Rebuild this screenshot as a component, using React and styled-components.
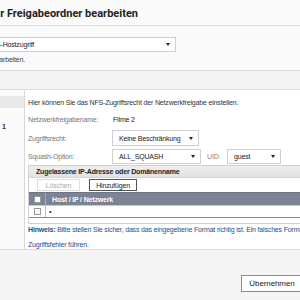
import React from "react";
import styled, { createGlobalStyle } from "styled-components";

const GlobalStyle = createGlobalStyle`
    html, body {
        margin: 0;
        padding: 0;
        background: #fafafa;
        overflow: hidden;
    }
    body {
        font-family: "Liberation Sans", Arial, sans-serif;
        font-size: 7px;
        letter-spacing: -0.17px;
        color: #333;
    }
`;

const Dialog = styled.div`
    width: 300px;
    height: 300px;
    display: flex;
    flex-direction: column;
    background: #fafafa;
    overflow: hidden;
`;

const Header = styled.div`
    height: 25px;
    border-bottom: 1px solid #e0e0e0;
    display: flex;
    align-items: center;
`;

// right edge of the visible title sits at x=138, the start is clipped by the window
const Title = styled.div`
    width: 138px;
    display: flex;
    justify-content: flex-end;
    white-space: nowrap;
    font-family: Roboto, "Liberation Sans", sans-serif;
    font-weight: bold;
    font-size: 11px;
    letter-spacing: 0;
    color: #222;
    padding-top: 2px;
`;

const TypeSection = styled.div`
    height: 45px;
    padding-top: 11px;
    box-sizing: border-box;
    border-bottom: 1px solid #dcdcdc;
`;

const Select = styled.div`
    box-sizing: border-box;
    height: ${(p) => p.$h || 15}px;
    width: ${(p) => p.$w}px;
    margin-left: ${(p) => p.$ml || 0}px;
    background: #fff;
    border: 1px solid #cfcfcf;
    display: flex;
    align-items: center;
    justify-content: space-between;
    padding: 0 5px 0 ${(p) => p.$pl || 6}px;
    white-space: nowrap;
    color: #222;
    font-size: 7px;
`;

const Arrow = styled.span`
    width: 0;
    height: 0;
    border-left: 2px solid transparent;
    border-right: 2px solid transparent;
    border-top: 3px solid #222;
`;

const ClippedLine = styled.div`
    width: ${(p) => p.$right}px;
    display: flex;
    justify-content: flex-end;
    white-space: nowrap;
    margin-top: ${(p) => p.$mt || 0}px;
    color: #444;
`;

const TabStrip = styled.div`
    height: 18px;
    background: #f4f4f4;
    border-bottom: 1px solid #dcdcdc;
`;

const Body = styled.div`
    height: 159px;
    display: flex;
    background: #fff;
`;

const Sidebar = styled.div`
    width: 24px;
    border-right: 1px solid #d6d6d6;
    display: flex;
    flex-direction: column;
    padding-top: 6px;
    background: #fafafa;
`;

const SideItem = styled.div`
    height: 12px;
    margin-top: ${(p) => (p.$active ? 0 : 12)}px;
    background: ${(p) => (p.$active ? "#e9e9e9" : "transparent")};
    display: flex;
    align-items: center;
    padding-left: 2px;
    font-weight: bold;
    color: #333;
`;

const Content = styled.div`
    flex: 1;
    padding: 8px 0 0 3px;
    display: flex;
    flex-direction: column;
    white-space: nowrap;
    min-width: 0;
`;

const Intro = styled.div`
    color: #333;
    height: 10px;
    line-height: 10px;
`;

const FormRow = styled.div`
    display: flex;
    align-items: center;
    height: ${(p) => p.$h}px;
    margin-top: ${(p) => p.$mt || 0}px;
`;

const Label = styled.div`
    width: 84px;
    color: #777;
`;

const Value = styled.div`
    color: #222;
    padding-left: 1px;
`;

const UidLabel = styled.div`
    color: #888;
    margin-left: 6px;
    width: 20px;
`;

const Panel = styled.div`
    margin-top: 1px;
    border: 1px solid #d0d0d0;
    border-right: none;
    height: 58px;
    display: flex;
    flex-direction: column;
    background: #fff;
`;

const PanelTitle = styled.div`
    height: 11px;
    background: linear-gradient(#eeeeee, #e2e2e2);
    border-bottom: 1px solid #d4d4d4;
    display: flex;
    align-items: center;
    padding-left: 7px;
    font-weight: bold;
    color: #222;
`;

const Toolbar = styled.div`
    height: 14px;
    display: flex;
    align-items: center;
    padding-left: 8px;
    gap: 9px;
`;

const ToolButton = styled.div`
    box-sizing: border-box;
    height: 12px;
    width: ${(p) => p.$w}px;
    border: 1px solid ${(p) => (p.$disabled ? "#dedede" : "#555")};
    color: ${(p) => (p.$disabled ? "#aaa" : "#222")};
    background: #fff;
    display: flex;
    align-items: center;
    justify-content: center;
`;

const GridHead = styled.div`
    height: 12px;
    background: #7b8394;
    display: flex;
    align-items: center;
    border-top: 1px solid #6d7484;
    border-bottom: 1px solid #c8c8c8;
    color: #fff;
    font-weight: bold;
`;

const GridRow = styled.div`
    height: 11px;
    display: flex;
    align-items: center;
    border-bottom: 1px solid #8a8a8a;
    color: #222;
`;

const CheckCell = styled.div`
    width: 16px;
    height: 100%;
    display: flex;
    align-items: center;
    justify-content: center;
    border-right: 1px solid ${(p) => (p.$head ? "#a9aeb9" : "#bbb")};
`;

const Box = styled.div`
    box-sizing: border-box;
    width: 7px;
    height: 7px;
    border: 1px solid #999;
    background: ${(p) => (p.$filled ? "#fff" : "#fafafa")};
`;

const Cell = styled.div`
    padding-left: ${(p) => p.$pl || 3}px;
`;

const Hint = styled.div`
    color: #1d4f8c;
    margin-top: ${(p) => p.$mt}px;
    line-height: 9px;
    b {
        font-weight: bold;
    }
`;

const Footer = styled.div`
    flex: 1;
    border-top: 1px solid #dcdcdc;
    background: #f5f5f5;
    display: flex;
    justify-content: flex-end;
    align-items: flex-start;
    padding-top: 25px;
`;

const ApplyButton = styled.div`
    box-sizing: border-box;
    width: 62px;
    height: 17px;
    margin-right: -3px;
    border: 1px solid #8c8c8c;
    background: #fff;
    display: flex;
    align-items: center;
    justify-content: center;
    font-size: 8px;
    letter-spacing: -0.1px;
    color: #222;
`;

export default function App() {
    return (
        <>
            <GlobalStyle />
            <Dialog>
                <Header>
                    <Title>Berechtigungen für Freigabeordner bearbeiten</Title>
                </Header>
                <TypeSection>
                    <Select $w={194} $ml={-18} $pl={4}>
                        <span>NFS-Hostzugriff</span>
                        <Arrow />
                    </Select>
                    <ClippedLine $right={25} $mt={4}>
                        Wählen Sie den Berechtigungstyp zum Bearbeiten.
                    </ClippedLine>
                </TypeSection>
                <TabStrip />
                <Body>
                    <Sidebar>
                        <SideItem $active />
                        <SideItem>1</SideItem>
                    </Sidebar>
                    <Content>
                        <Intro>Hier können Sie das NFS-Zugriffsrecht der Netzwerkfreigabe einstellen.</Intro>
                        <FormRow $h={12} $mt={6}>
                            <Label>Netzwerkfreigabename:</Label>
                            <Value>Filme 2</Value>
                        </FormRow>
                        <FormRow $h={17} $mt={4}>
                            <Label>Zugriffsrecht:</Label>
                            <Select $w={87} $h={16}>
                                <span>Keine Beschränkung</span>
                                <Arrow />
                            </Select>
                        </FormRow>
                        <FormRow $h={16} $mt={2}>
                            <Label>Squash-Option:</Label>
                            <Select $w={89} $h={15}>
                                <span>ALL_SQUASH</span>
                                <Arrow />
                            </Select>
                            <UidLabel>UID:</UidLabel>
                            <Select $w={54} $h={15}>
                                <span>guest</span>
                                <Arrow />
                            </Select>
                        </FormRow>
                        <Panel>
                            <PanelTitle>Zugelassene IP-Adresse oder Domänenname</PanelTitle>
                            <Toolbar>
                                <ToolButton $w={43} $disabled>Löschen</ToolButton>
                                <ToolButton $w={48}>Hinzufügen</ToolButton>
                            </Toolbar>
                            <GridHead>
                                <CheckCell $head>
                                    <Box $filled />
                                </CheckCell>
                                <Cell $pl={6}>Host / IP / Netzwerk</Cell>
                            </GridHead>
                            <GridRow>
                                <CheckCell>
                                    <Box />
                                </CheckCell>
                                <Cell>•</Cell>
                            </GridRow>
                        </Panel>
                        <Hint $mt={1}>
                            <b>Hinweis:</b> Bitte stellen Sie sicher, dass das eingegebene Format richtig ist. Ein falsches Format kann zu
                        </Hint>
                        <Hint $mt={6}>Zugriffsfehler führen.</Hint>
                    </Content>
                </Body>
                <Footer>
                    <ApplyButton>Übernehmen</ApplyButton>
                </Footer>
            </Dialog>
        </>
    );
}
